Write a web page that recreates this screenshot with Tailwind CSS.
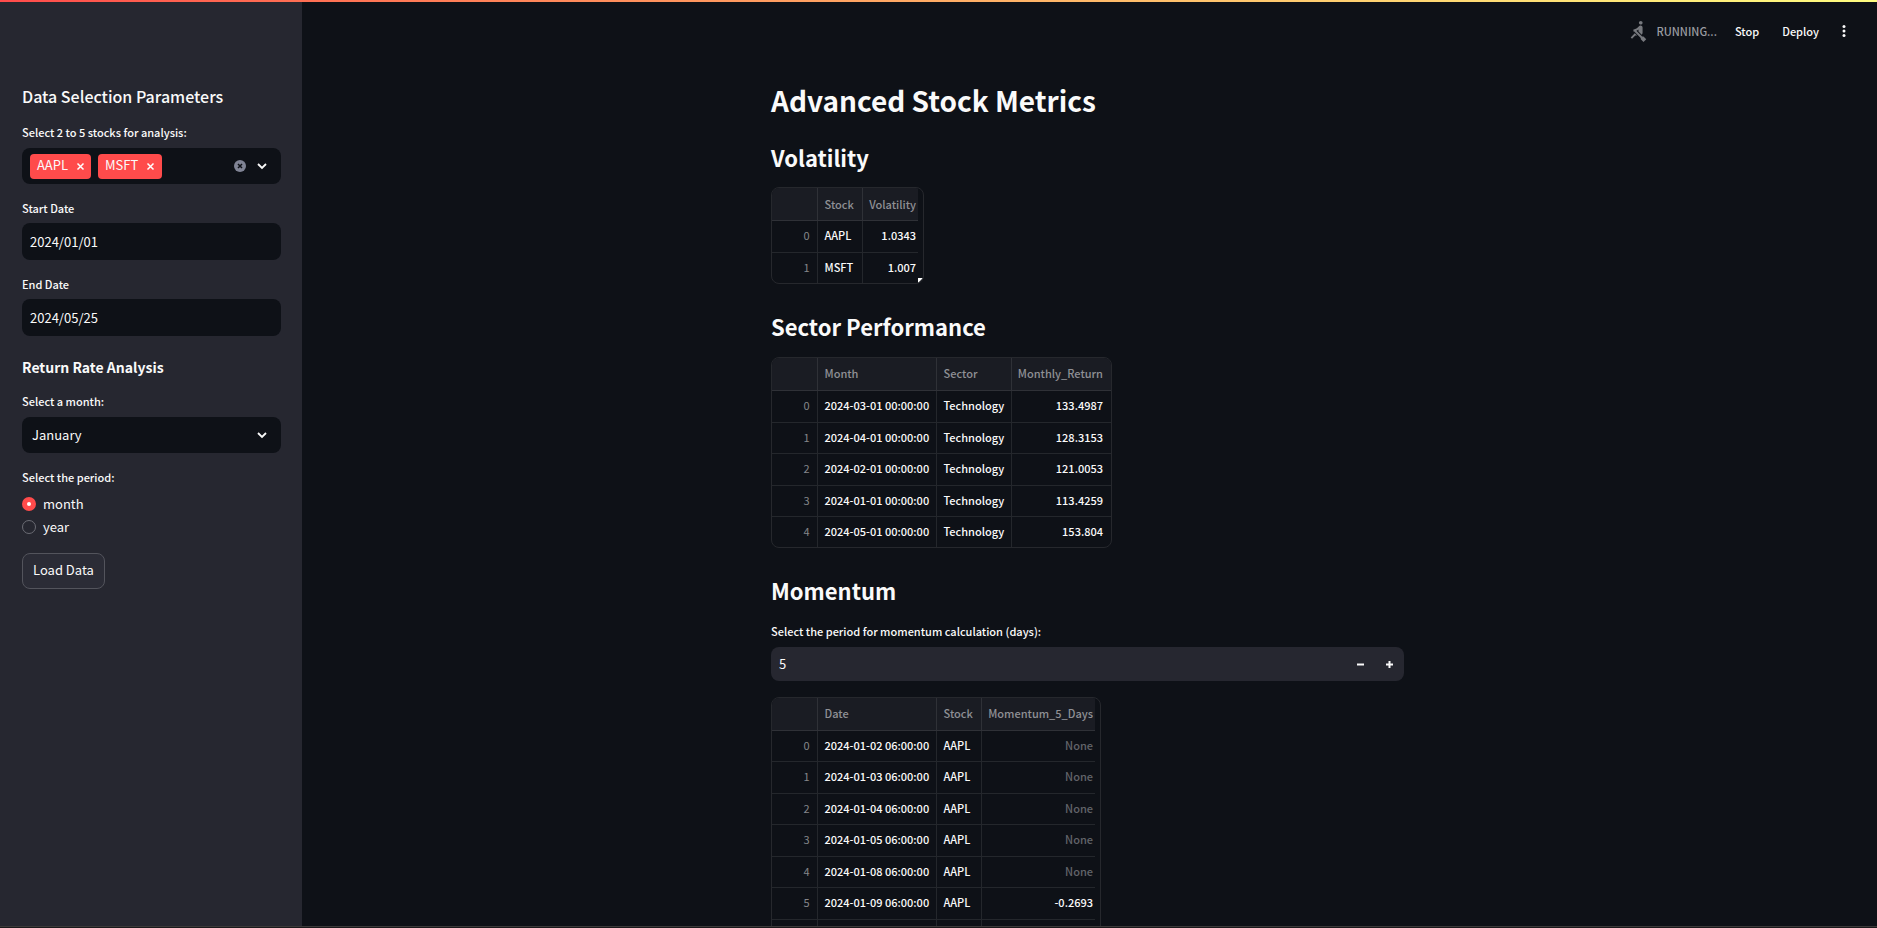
<!DOCTYPE html>
<html lang="en">
<head>
<meta charset="utf-8">
<title>Advanced Stock Metrics</title>
<script src="https://cdn.jsdelivr.net/npm/@tailwindcss/browser@4"></script>
</head>
<body class="h-screen overflow-hidden bg-[#0e1117] font-['Noto_Sans_CJK_SC','Noto_Sans_CJK_JP',sans-serif] text-[#fafafa] text-[13px]">
<div class="flex h-full flex-col">
  <div class="h-[2px] shrink-0 bg-linear-to-r from-[#ff4b4b] to-[#fffd80]"></div>
  <div class="flex min-h-0 flex-1">
    <aside class="w-[302px] shrink-0 bg-[#262730] pl-[22px] pr-[21px] pt-[81px]">
      <h2 class="h-[27px] text-base font-medium leading-[26px]">Data Selection Parameters</h2>
      <form class="flex flex-col">
        <div class="mt-3">
          <label for="stocks" class="block h-6 text-[11px] font-medium leading-5">Select 2 to 5 stocks for analysis:</label>
          <div class="mt-[2px] flex h-9 items-center rounded-lg bg-[#0e1117] pl-2 pr-3">
            <span class="flex h-[25px] items-center rounded bg-[#ff4b4b] pl-[7px] pr-[6px] leading-[22px]"><span class="h-[25px]">AAPL</span>
              <button type="button" aria-label="Remove AAPL" class="ml-2"><svg class="size-[9px]" viewBox="0 0 9 9" stroke="#fff" stroke-width="1.500"><path d="M1.500 1.500l6 6M7.500 1.500l-6 6"/></svg></button></span>
            <span class="ml-[7px] flex h-[25px] items-center rounded bg-[#ff4b4b] pl-[7px] pr-[7px] leading-[22px]"><span class="h-[25px]">MSFT</span>
              <button type="button" aria-label="Remove MSFT" class="ml-2"><svg class="size-[9px]" viewBox="0 0 9 9" stroke="#fff" stroke-width="1.500"><path d="M1.500 1.500l6 6M7.500 1.500l-6 6"/></svg></button></span>
            <input id="stocks" class="min-w-0 flex-1 bg-transparent outline-none">
            <button type="button" aria-label="Clear all"><svg class="size-3" viewBox="0 0 12 12"><circle cx="6" cy="6" r="6" fill="#808495"/><path d="M4 4l4 4M8 4l-4 4" stroke="#0e1117" stroke-width="1.500"/></svg></button>
            <button type="button" aria-label="Open" class="ml-[9px]"><svg class="size-[14px]" viewBox="0 0 14 14" fill="none" stroke="#fafafa" stroke-width="1.800"><path d="M3 5l4 4 4-4"/></svg></button>
          </div>
        </div>
        <div class="mt-[14px]">
          <label for="start" class="block h-[23px] text-[11px] font-medium leading-5">Start Date</label>
          <input id="start" value="2024/01/01" class="mt-[2px] block h-[37px] w-full rounded-lg bg-[#0e1117] px-2 outline-none">
        </div>
        <div class="mt-[14px]">
          <label for="end" class="block h-[23px] text-[11px] font-medium leading-5">End Date</label>
          <input id="end" value="2024/05/25" class="mt-[2px] block h-[37px] w-full rounded-lg bg-[#0e1117] px-2 outline-none">
        </div>
        <h3 class="mt-[20px] h-6 text-sm font-bold leading-[22px]">Return Rate Analysis</h3>
        <div class="mt-[11px]">
          <label for="month" class="block h-6 text-[11px] font-medium leading-5">Select a month:</label>
          <div class="relative mt-[2px]">
            <select id="month" class="block h-9 w-full appearance-none rounded-lg bg-[#0e1117] px-[10px] outline-none"><option>January</option><option>February</option><option>March</option></select>
            <svg class="pointer-events-none absolute right-3 top-[11px] size-[14px]" viewBox="0 0 14 14" fill="none" stroke="#fafafa" stroke-width="1.800"><path d="M3 5l4 4 4-4"/></svg>
          </div>
        </div>
        <fieldset class="mt-[14px]">
          <legend class="block h-[25px] text-[11px] font-medium leading-5">Select the period:</legend>
          <label class="flex h-[23px] items-center gap-[7px]"><input type="radio" name="period" checked class="size-[14px] appearance-none rounded-full border border-[#6b6c74] checked:border-[5px] checked:border-[#ff4b4b] checked:bg-white">month</label>
          <label class="flex h-[23px] items-center gap-[7px]"><input type="radio" name="period" class="size-[14px] appearance-none rounded-full border border-[#6b6c74] checked:border-[5px] checked:border-[#ff4b4b] checked:bg-white">year</label>
        </fieldset>
        <button type="button" class="mt-[15px] h-9 self-start rounded-lg border border-[#53545c] bg-[#2b2c36] px-[10px] pb-[2px]">Load Data</button>
      </form>
    </aside>
    <div class="flex min-w-0 flex-1 flex-col">
      <header class="flex h-[58px] shrink-0 items-center justify-end pr-[27px] text-[11px]">
        <svg class="size-[22px]" viewBox="0 0 24 24" fill="#77797e"><path d="M8.500 14.500L4 19l1.500 1.500L9 17h2l-2.500-2.500zM15 1c-1.100 0-2 .9-2 2s.9 2 2 2 2-.9 2-2-.9-2-2-2zm6 20.010L18 24l-2.990-3.010V19.500l-7.100-7.090c-.31.05-.61.07-.91.07v-2.160c1.660.03 3.610-.87 4.670-2.040l1.400-1.550c.19-.21.43-.38.69-.5.29-.14.62-.23.96-.23h.03C15.990 6.010 17 7.020 17 8.260v5.750c0 .84-.35 1.610-.92 2.160l-3.580-3.580v-2.270c-.63.52-1.430 1.020-2.290 1.390L16.500 18H18l3 3.010z"/></svg>
        <span class="ml-[7px] text-[#9a9ca1] font-medium">RUNNING...</span>
        <button type="button" class="ml-[18px] font-medium">Stop</button>
        <button type="button" class="ml-[23px] font-medium">Deploy</button>
        <button type="button" aria-label="Menu" class="ml-[19px]"><svg class="h-[14px] w-3" viewBox="0 0 12 14" fill="#fafafa"><circle cx="6" cy="2.500" r="1.500"/><circle cx="6" cy="7" r="1.500"/><circle cx="6" cy="11.500" r="1.500"/></svg></button>
      </header>
      <main class="min-h-0 flex-1 overflow-hidden pr-1">
        <div class="mx-auto max-w-[633px] pt-[19px]">
          <h1 class="h-[42px] text-[28px] font-bold leading-[42px]">Advanced Stock Metrics</h1>
          <h2 class="mt-[20px] h-8 text-[22px] font-bold leading-8">Volatility</h2>
          <div class="relative mt-[14px] h-[97px] w-[153px] overflow-hidden rounded-lg border border-[#26282d]">
            <table class="w-[146px] table-fixed border-collapse text-[11px] font-medium leading-4 [&_td]:pb-[2px]">
              <colgroup><col class="w-[45px]"><col class="w-[45px]"><col></colgroup>
              <thead><tr class="h-8 border-b border-[#2f3137] bg-[#1a1c23] text-[#8f9095]"><th class="border-r border-[#2f3137]"></th><th class="border-r border-[#2f3137] pl-[7px] text-left font-medium">Stock</th><th class="pr-[2px] text-right font-medium">Volatility</th></tr></thead>
              <tbody>
                <tr class="h-8 border-b border-[#24272c]"><td class="border-r border-[#24272c] pr-[7px] text-right font-normal text-[#85868a]">0</td><td class="border-r border-[#24272c] pl-[7px]">AAPL</td><td class="pr-[2px] text-right">1.0343</td></tr>
                <tr class="h-[31px]"><td class="border-r border-[#24272c] pr-[7px] text-right font-normal text-[#85868a]">1</td><td class="border-r border-[#24272c] pl-[7px]">MSFT</td><td class="pr-[2px] text-right">1.007</td></tr>
              </tbody>
            </table>
            <svg class="absolute bottom-0 right-0 size-[5px]" viewBox="0 0 5 5"><path d="M0 0h5L0 5z" fill="#fff"/></svg>
          </div>
          <h2 class="mt-[26px] h-8 text-[22px] font-bold leading-8">Sector Performance</h2>
          <div class="mt-[15px] w-[341px] overflow-hidden rounded-lg border border-[#26282d]">
            <table class="w-full table-fixed border-collapse text-[11px] font-medium leading-4 [&_td]:pb-[2px] [&_th]:pb-[2px]">
              <colgroup><col class="w-[45px]"><col class="w-[119px]"><col class="w-[75px]"><col></colgroup>
              <thead><tr class="h-8 border-b border-[#2f3137] bg-[#1a1c23] text-[#8f9095]"><th class="border-r border-[#2f3137]"></th><th class="border-r border-[#2f3137] pl-[7px] text-left font-medium">Month</th><th class="border-r border-[#2f3137] pl-[7px] text-left font-medium">Sector</th><th class="pr-2 text-right font-medium">Monthly_Return</th></tr></thead>
              <tbody>
                <tr class="h-8 border-b border-[#24272c]"><td class="border-r border-[#24272c] pr-[7px] text-right font-normal text-[#85868a]">0</td><td class="border-r border-[#24272c] pl-[7px]">2024-03-01 00:00:00</td><td class="border-r border-[#24272c] pl-[7px]">Technology</td><td class="pr-2 text-right">133.4987</td></tr>
                <tr class="h-[31px] border-b border-[#24272c]"><td class="border-r border-[#24272c] pr-[7px] text-right font-normal text-[#85868a]">1</td><td class="border-r border-[#24272c] pl-[7px]">2024-04-01 00:00:00</td><td class="border-r border-[#24272c] pl-[7px]">Technology</td><td class="pr-2 text-right">128.3153</td></tr>
                <tr class="h-8 border-b border-[#24272c]"><td class="border-r border-[#24272c] pr-[7px] text-right font-normal text-[#85868a]">2</td><td class="border-r border-[#24272c] pl-[7px]">2024-02-01 00:00:00</td><td class="border-r border-[#24272c] pl-[7px]">Technology</td><td class="pr-2 text-right">121.0053</td></tr>
                <tr class="h-[31px] border-b border-[#24272c]"><td class="border-r border-[#24272c] pr-[7px] text-right font-normal text-[#85868a]">3</td><td class="border-r border-[#24272c] pl-[7px]">2024-01-01 00:00:00</td><td class="border-r border-[#24272c] pl-[7px]">Technology</td><td class="pr-2 text-right">113.4259</td></tr>
                <tr class="h-[31px]"><td class="border-r border-[#24272c] pr-[7px] text-right font-normal text-[#85868a]">4</td><td class="border-r border-[#24272c] pl-[7px]">2024-05-01 00:00:00</td><td class="border-r border-[#24272c] pl-[7px]">Technology</td><td class="pr-2 text-right">153.804</td></tr>
              </tbody>
            </table>
          </div>
          <h2 class="mt-[26px] h-8 text-[22px] font-bold leading-8">Momentum</h2>
          <label for="days" class="mt-[15px] block h-6 text-[11px] font-medium leading-5">Select the period for momentum calculation (days):</label>
          <div class="mt-[2px] flex h-[34px] items-center overflow-hidden rounded-lg bg-[#262730]">
            <input id="days" value="5" inputmode="numeric" class="h-full min-w-0 flex-1 bg-transparent px-2 pb-[2px] outline-none">
            <button type="button" aria-label="Decrease" class="flex h-full w-[29px] items-center justify-center"><svg class="size-[9px]" viewBox="0 0 9 9"><path d="M1 4.500h7" stroke="#fafafa" stroke-width="2"/></svg></button>
            <button type="button" aria-label="Increase" class="flex h-full w-[29px] items-center justify-center"><svg class="size-[9px]" viewBox="0 0 9 9"><path d="M1 4.500h7M4.500 1v7" stroke="#fafafa" stroke-width="2"/></svg></button>
          </div>
          <div class="mt-4 w-[330px] overflow-hidden rounded-t-lg border border-[#26282d]">
            <table class="w-[323px] table-fixed border-collapse text-[11px] font-medium leading-4 [&_td]:pb-[2px] [&_th]:pb-[2px]">
              <colgroup><col class="w-[45px]"><col class="w-[119px]"><col class="w-[45px]"><col></colgroup>
              <thead><tr class="h-8 border-b border-[#2f3137] bg-[#1a1c23] text-[#8f9095]"><th class="border-r border-[#2f3137]"></th><th class="border-r border-[#2f3137] pl-[7px] text-left font-medium">Date</th><th class="border-r border-[#2f3137] pl-[7px] text-left font-medium">Stock</th><th class="pr-[2px] text-right font-medium">Momentum_5_Days</th></tr></thead>
              <tbody>
                <tr class="h-[31px] border-b border-[#24272c]"><td class="border-r border-[#24272c] pr-[7px] text-right font-normal text-[#85868a]">0</td><td class="border-r border-[#24272c] pl-[7px]">2024-01-02 06:00:00</td><td class="border-r border-[#24272c] pl-[7px]">AAPL</td><td class="pr-[2px] text-right text-[#62646a]">None</td></tr>
                <tr class="h-8 border-b border-[#24272c]"><td class="border-r border-[#24272c] pr-[7px] text-right font-normal text-[#85868a]">1</td><td class="border-r border-[#24272c] pl-[7px]">2024-01-03 06:00:00</td><td class="border-r border-[#24272c] pl-[7px]">AAPL</td><td class="pr-[2px] text-right text-[#62646a]">None</td></tr>
                <tr class="h-[31px] border-b border-[#24272c]"><td class="border-r border-[#24272c] pr-[7px] text-right font-normal text-[#85868a]">2</td><td class="border-r border-[#24272c] pl-[7px]">2024-01-04 06:00:00</td><td class="border-r border-[#24272c] pl-[7px]">AAPL</td><td class="pr-[2px] text-right text-[#62646a]">None</td></tr>
                <tr class="h-8 border-b border-[#24272c]"><td class="border-r border-[#24272c] pr-[7px] text-right font-normal text-[#85868a]">3</td><td class="border-r border-[#24272c] pl-[7px]">2024-01-05 06:00:00</td><td class="border-r border-[#24272c] pl-[7px]">AAPL</td><td class="pr-[2px] text-right text-[#62646a]">None</td></tr>
                <tr class="h-[31px] border-b border-[#24272c]"><td class="border-r border-[#24272c] pr-[7px] text-right font-normal text-[#85868a]">4</td><td class="border-r border-[#24272c] pl-[7px]">2024-01-08 06:00:00</td><td class="border-r border-[#24272c] pl-[7px]">AAPL</td><td class="pr-[2px] text-right text-[#62646a]">None</td></tr>
                <tr class="h-8 border-b border-[#24272c]"><td class="border-r border-[#24272c] pr-[7px] text-right font-normal text-[#85868a]">5</td><td class="border-r border-[#24272c] pl-[7px]">2024-01-09 06:00:00</td><td class="border-r border-[#24272c] pl-[7px]">AAPL</td><td class="pr-[2px] text-right">-0.2693</td></tr>
                <tr class="h-8"><td class="border-r border-[#24272c]"></td><td class="border-r border-[#24272c]"></td><td class="border-r border-[#24272c]"></td><td></td></tr>
              </tbody>
            </table>
          </div>
        </div>
      </main>
    </div>
  </div>
  <div class="h-[2px] shrink-0 border-t border-[#3c3a3a] bg-[#1b1a1c]"></div>
</div>
</body>
</html>
